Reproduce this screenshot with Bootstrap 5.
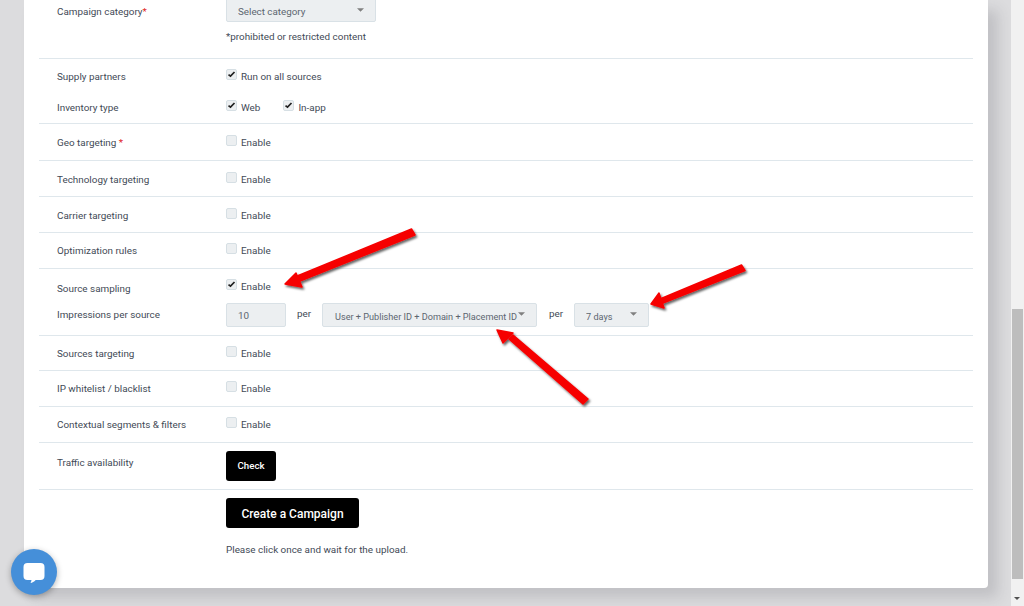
<!DOCTYPE html>
<html lang="en">
<head>
<meta charset="utf-8">
<title>Create a Campaign</title>
<link href="https://cdn.jsdelivr.net/npm/bootstrap@5.3.0/dist/css/bootstrap.min.css" rel="stylesheet">
<style>
html,body{height:606px;overflow:hidden}
body{background:#dcdcde;font-family:Roboto,"Liberation Sans",sans-serif;font-size:9.9px;color:#3f4a56;line-height:14px}
.page-wrap{height:606px;position:relative}
.main-area{padding:0 23px 0 24px;min-width:0}
.sheet{background:#fff;height:588px;border-radius:0 0 4px 4px;padding:0 15px;box-shadow:10px 10px 14px rgba(60,60,70,.17);overflow:hidden}
.fbar{width:13px;background:#f1f1f1;position:relative;flex:none}
.fthumb{position:absolute;left:1px;right:1px;top:309px;height:270px;background:#bdbdbd}
.farrow{position:absolute;left:3px;top:597px;width:0;height:0;border:3.5px solid transparent;border-top-color:#505050;border-bottom-width:0}
.sect{border-bottom:1px solid #dfe7ec}
.sect:last-child{border-bottom:0}
.frow{display:flex;align-items:flex-start}
.lab{width:187px;padding-left:18px;flex:none}
.req{color:#e01b24}
.boxlab{display:inline-flex;align-items:center;margin-right:23px;margin-bottom:0;gap:4px}
.tick{appearance:none;width:11px;height:11px;margin:0;background:#eceff1 center/9px no-repeat;border:1px solid #d6dfe4;border-radius:2px;flex:none;position:relative;top:-3px}
.tick:checked{background-image:url("data:image/svg+xml,%3Csvg xmlns='http://www.w3.org/2000/svg' viewBox='0 0 9 9'%3E%3Cpath d='M1.5 4.6l2 1.6 4-4.2' fill='none' stroke='%23222' stroke-width='1.7'/%3E%3C/svg%3E")}
.fld{height:24px;background-color:#eceff1;border:1px solid #d9e1e6;border-radius:2px;color:#5c6670;line-height:14px;box-shadow:none}
.fsel{appearance:none;background-image:url("data:image/svg+xml,%3Csvg xmlns='http://www.w3.org/2000/svg' viewBox='0 0 8 4'%3E%3Cpath d='M0 0h8L4 4z' fill='%23808080'/%3E%3C/svg%3E");background-repeat:no-repeat;background-size:7px 4px;padding:3px 0 0 12px}
.sel-cat{width:150px;background-position:130px 9px;margin-top:-2px;font-size:9.8px;padding:3px 0 0 11px}
.sel-key{width:215px;background-position:195px 8px;font-size:9.15px;margin-right:1px}
.sel-days{width:75px;background-position:55px 8px;font-size:9.15px;padding-left:11px}
.num-fld{width:60px;padding:0 0 0 11px;font-size:9.9px}
.per-txt{width:36px;text-align:center;margin-top:4px;flex:none}
.dark-btn{background:#000;color:#fff;border:0;border-radius:3px;font-weight:500;padding:1px 0 0}
.dark-btn:hover{background:#000;color:#fff}
.btn-check-av{width:50px;height:30px;font-size:9.7px}
.btn-make{width:133px;height:30px;font-size:12px}
.chat-dot{position:absolute;left:11px;top:549px;width:46px;height:46px;border-radius:50%;background:#458fd9;box-shadow:0 2px 6px rgba(0,0,0,.3)}
.arrows{position:absolute;left:0;top:0;pointer-events:none}
</style>
</head>
<body>
<div class="page-wrap d-flex">
  <div class="main-area flex-grow-1">
    <div class="sheet">
      <div class="sect" style="height:59px">
        <div class="frow"><div class="lab" style="padding-top:5px">Campaign category<span class="req">*</span></div>
          <div>
            <select class="fld fsel sel-cat d-block"><option>Select category</option></select>
            <div style="margin-top:8px">*prohibited or restricted content</div>
          </div>
        </div>
      </div>
      <div class="sect" style="height:65px;padding-top:11px">
        <div class="frow" style="height:31px"><div class="lab">Supply partners</div><label class="boxlab"><input class="tick" type="checkbox" checked>Run on all sources</label></div>
        <div class="frow"><div class="lab">Inventory type</div><label class="boxlab"><input class="tick" type="checkbox" checked>Web</label><label class="boxlab"><input class="tick" type="checkbox" checked>In-app</label></div>
      </div>
      <div class="sect frow" style="height:37px;padding-top:12px"><div class="lab">Geo targeting <span class="req">*</span></div><label class="boxlab"><input class="tick" type="checkbox">Enable</label></div>
      <div class="sect frow" style="height:36px;padding-top:12px"><div class="lab">Technology targeting</div><label class="boxlab"><input class="tick" type="checkbox">Enable</label></div>
      <div class="sect frow" style="height:36px;padding-top:12px"><div class="lab">Carrier targeting</div><label class="boxlab"><input class="tick" type="checkbox">Enable</label></div>
      <div class="sect frow" style="height:36px;padding-top:11px"><div class="lab">Optimization rules</div><label class="boxlab"><input class="tick" type="checkbox">Enable</label></div>
      <div class="sect" style="height:67px;padding-top:11px">
        <div class="frow" style="height:23px"><div class="lab" style="padding-top:2px">Source sampling</div><label class="boxlab"><input class="tick" type="checkbox" checked>Enable</label></div>
        <div class="frow"><div class="lab" style="padding-top:5px">Impressions per source</div>
          <input class="fld num-fld" type="text" value="10">
          <span class="per-txt">per</span>
          <select class="fld fsel sel-key"><option>User + Publisher ID + Domain + Placement ID</option></select>
          <span class="per-txt">per</span>
          <select class="fld fsel sel-days"><option>7 days</option></select>
        </div>
      </div>
      <div class="sect frow" style="height:35px;padding-top:11px"><div class="lab">Sources targeting</div><label class="boxlab"><input class="tick" type="checkbox">Enable</label></div>
      <div class="sect frow" style="height:36px;padding-top:11px"><div class="lab">IP whitelist / blacklist</div><label class="boxlab"><input class="tick" type="checkbox">Enable</label></div>
      <div class="sect frow" style="height:36px;padding-top:11px"><div class="lab">Contextual segments &amp; filters</div><label class="boxlab"><input class="tick" type="checkbox">Enable</label></div>
      <div class="sect frow" style="height:47px;padding-top:8px"><div class="lab" style="padding-top:5px">Traffic availability</div><button class="btn dark-btn btn-check-av" type="button">Check</button></div>
      <div class="frow" style="padding-top:8px"><div class="lab"></div>
        <div><button class="btn dark-btn btn-make d-block" type="button">Create a Campaign</button>
        <div style="margin-top:15px">Please click once and wait for the upload.</div></div>
      </div>
    </div>
  </div>
  <div class="fbar"><div class="fthumb"></div><div class="farrow"></div></div>
  <svg class="arrows" width="1024" height="606" viewBox="0 0 1024 606" aria-hidden="true">
    <defs><filter id="sh" x="-20%" y="-20%" width="140%" height="140%"><feDropShadow dx="1.5" dy="2" stdDeviation="1.2" flood-color="#000" flood-opacity=".6"/></filter></defs>
    <g filter="url(#sh)" fill="#f60000" stroke="#f60000" stroke-linejoin="round">
      <path d="M296 276.5L411.5 229L415 235L300 281Z" stroke-width="1.5"/><path d="M285 284L296 273L302 287Z" stroke-width="1.5"/>
      <path d="M660 299L741.5 265L745 270.5L663 303Z" stroke-width="1.5"/><path d="M651 304L659 293L664 308Z" stroke-width="1.5"/>
      <path d="M509 339L583 404L588 399L513 335Z" stroke-width="1.5"/><path d="M497 330L513 333L503 343Z" stroke-width="1.5"/>
    </g>
  </svg>
  <div class="chat-dot">
    <svg width="46" height="46" viewBox="0 0 46 46" aria-hidden="true"><path d="M16.5 14h13a4 4 0 0 1 4 4v9a4 4 0 0 1-4 4h-4.8c-1.6 1.7-3.4 2.7-5.2 3 .6-.9.9-1.9 1-3h-4a4 4 0 0 1-4-4v-9a4 4 0 0 1 4-4z" fill="#fff"/></svg>
  </div>
</div>
<script src="https://cdn.jsdelivr.net/npm/bootstrap@5.3.0/dist/js/bootstrap.bundle.min.js"></script>
</body>
</html>
